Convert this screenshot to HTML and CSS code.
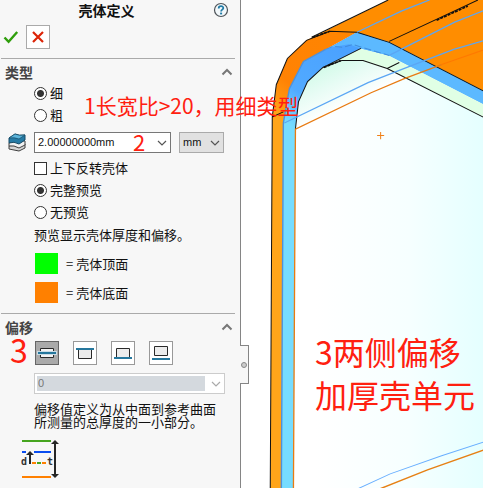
FILE: index.html
```html
<!DOCTYPE html>
<html lang="zh-CN">
<head>
<meta charset="utf-8">
<title>壳体定义</title>
<link rel="stylesheet" href="styles.css">
</head>
<body>
<main class="app">
  <form class="panel">
    <header class="panel-head">
      <h1 class="title">壳体定义</h1>
      <button class="help" type="button" aria-label="帮助">
        <svg width="16" height="16" viewBox="0 0 16 16"><circle cx="8" cy="8" r="6.5" fill="#f2f8fb" stroke="#4d5358" stroke-width="1.2"/><path d="M5.7 6.4C5.7 3.3 10.4 3.5 10.3 6.1C10.2 7.6 8.1 7.7 8.1 9.4" fill="none" stroke="#207aa5" stroke-width="1.8"/><path d="M7.1 10.6h2v1.8h-2z" fill="#207aa5"/></svg>
      </button>
    </header>
    <div class="actions">
      <button class="ok" type="button" aria-label="确定">
        <svg width="16" height="14" viewBox="0 0 16 14"><path d="M1.5 7.5L5.6 11.8L14.2 2" fill="none" stroke="#2f9e0c" stroke-width="2.4"/></svg>
      </button>
      <button class="cancel" type="button" aria-label="取消">
        <svg width="12" height="12" viewBox="0 0 12 12"><path d="M1 1L11 11M11 1L1 11" fill="none" stroke="#dc2407" stroke-width="2.2"/></svg>
      </button>
    </div>

    <section class="section">
      <div class="section-head">
        <h2 class="heading">类型</h2>
        <button class="collapse" type="button" aria-label="折叠类型"><svg width="12" height="8" viewBox="0 0 12 8"><path d="M1.5 6.5L6 2L10.5 6.5" fill="none" stroke="#777" stroke-width="2"/></svg></button>
      </div>
      <div class="content">
        <label class="option"><input class="radio" type="radio" name="type" checked>细</label>
        <label class="option"><input class="radio" type="radio" name="type">粗</label>
        <span class="note note-ratio">1长宽比&gt;20，用细类型</span>
      </div>
      <div class="thickness">
        <svg class="layers" width="18" height="19" viewBox="0 0 18 19"><path d="M1 13L7 10L17 11V15L11 18L1 16Z" fill="#d5d5d5" stroke="#3f3f3f"/><path d="M1 10L7 7L17 8V12L11 15Q6 12 1 13Z" fill="#f2f2f2" stroke="#3f3f3f"/><path d="M1 5L7 1Q11 3 17 2V7L11 11Q6 8 1 10Z" fill="#267ba5" stroke="#164a66"/><path d="M1 5L7 1Q11 3 17 2L11 6Q6 4 1 5Z" fill="#5db5db" stroke="#164a66" stroke-width=".7"/></svg>
        <div class="combo combo-value">
          <select class="select" aria-label="厚度"><option>2.00000000mm</option></select>
          <svg class="chevron" width="10" height="6" viewBox="0 0 10 6"><path d="M1 1L5 5L9 1" fill="none" stroke="#555" stroke-width="1.2"/></svg>
          <span class="note note-two">2</span>
        </div>
        <div class="combo combo-unit">
          <select class="select" aria-label="单位"><option>mm</option></select>
          <svg class="chevron" width="10" height="6" viewBox="0 0 10 6"><path d="M1 1L5 5L9 1" fill="none" stroke="#555" stroke-width="1.2"/></svg>
        </div>
      </div>
      <div class="content">
        <label class="option"><input class="check" type="checkbox">上下反转壳体</label>
        <label class="option"><input class="radio" type="radio" name="preview" checked>完整预览</label>
        <label class="option"><input class="radio" type="radio" name="preview">无预览</label>
        <p class="hint">预览显示壳体厚度和偏移。</p>
        <ul class="legend">
          <li class="legend-row"><span class="swatch swatch-top"></span>= 壳体顶面</li>
          <li class="legend-row"><span class="swatch swatch-bottom"></span>= 壳体底面</li>
        </ul>
      </div>
    </section>

    <section class="section">
      <div class="section-head">
        <h2 class="heading">偏移</h2>
        <button class="collapse" type="button" aria-label="折叠偏移"><svg width="12" height="8" viewBox="0 0 12 8"><path d="M1.5 6.5L6 2L10.5 6.5" fill="none" stroke="#777" stroke-width="2"/></svg></button>
      </div>
      <div class="content">
        <span class="note note-three">3</span>
        <div class="tools">
          <button class="tool tool-on" type="button" aria-label="中面"><svg width="22" height="22" viewBox="0 0 22 22"><path d="M4.5 6.5h13v9h-13z" fill="#f4f4f4" stroke="#292929"/><path d="M1 9h20v4H1z" fill="#cbdce5"/><path d="M2 10h18v2H2z" fill="#26779d"/></svg></button>
          <button class="tool" type="button" aria-label="顶面"><svg width="22" height="22" viewBox="0 0 22 22"><path d="M4.5 7.5h13v9h-13z" fill="#ececec" stroke="#292929"/><path d="M2 6h18v2H2z" fill="#26779d"/></svg></button>
          <button class="tool" type="button" aria-label="底面"><svg width="22" height="22" viewBox="0 0 22 22"><path d="M4.5 6.5h13v9h-13z" fill="#ececec" stroke="#292929"/><path d="M2 15h18v2H2z" fill="#26779d"/></svg></button>
          <button class="tool" type="button" aria-label="参考曲面"><svg width="22" height="22" viewBox="0 0 22 22"><path d="M4.5 4.5h13v9h-13z" fill="#ececec" stroke="#292929"/><path d="M2 16h18v2H2z" fill="#26779d"/></svg></button>
        </div>
        <div class="combo combo-offset">
          <select class="select" aria-label="偏移值" disabled><option>0</option></select>
          <svg class="chevron" width="10" height="6" viewBox="0 0 10 6"><path d="M1 1L5 5L9 1" fill="none" stroke="#aaa" stroke-width="1.2"/></svg>
        </div>
        <p class="explain">偏移值定义为从中面到参考曲面<br>所测量的总厚度的一小部分。</p>
      </div>
      <svg class="diagram" width="40" height="44" viewBox="0 0 40 44">
        <path d="M1 3h29" stroke="#46a51f" stroke-width="2"/><path d="M1 14h4M13 14h17" stroke="#0a4df0" stroke-width="2"/>
        <path d="M1 39h29" stroke="#ff8000" stroke-width="2"/><path d="M11 25h4M21 25h4" stroke="#ff8000" stroke-width="2"/><path d="M16 25h4" stroke="#46a51f" stroke-width="2"/>
        <path d="M9 26V15M34 5v33" stroke="#262626" stroke-width="2"/><path d="M5 17L9 13L13 17ZM30 6L34 2L38 6ZM30 36L34 40L38 36Z" fill="#262626"/>
        <text class="diagram-text" x="0" y="27">d</text><text class="diagram-text" x="26" y="27">t</text>
      </svg>
    </section>
    <button class="handle" type="button" aria-label="收起面板"><span class="handle-dot"></span></button>
  </form>

  <section class="view">
    <svg class="model" viewBox="241 0 242 488" preserveAspectRatio="xMinYMin slice">
      <defs>
        <linearGradient id="inside" gradientUnits="userSpaceOnUse" x1="315" y1="0" x2="483" y2="0"><stop offset="0" stop-color="#fff"/><stop offset=".55" stop-color="#f6ffff"/><stop offset="1" stop-color="#e4ffff"/></linearGradient>
        <linearGradient id="corner" gradientUnits="userSpaceOnUse" x1="320" y1="62" x2="342" y2="108"><stop offset="0" stop-color="#cffbe6"/><stop offset=".5" stop-color="#e8fcf5"/><stop offset="1" stop-color="#fff"/></linearGradient>
        <linearGradient id="rim" gradientUnits="userSpaceOnUse" x1="350" y1="30" x2="276" y2="116"><stop offset="0" stop-color="#ff8500"/><stop offset=".7" stop-color="#ff8204"/><stop offset="1" stop-color="#ffa51a"/></linearGradient>
        <linearGradient id="band" gradientUnits="userSpaceOnUse" x1="340" y1="50" x2="287" y2="122"><stop offset="0" stop-color="#4ba2ff"/><stop offset=".65" stop-color="#51aaff"/><stop offset="1" stop-color="#76dcff"/></linearGradient>
      </defs>
      <path d="M294 488L295 128L370 92L403 78L483 108V488Z" fill="url(#inside)"/>
      <path d="M295 128L298 101L307 81L322 67L341 60H362L386 68L403 78L370 92Z" fill="url(#corner)"/>
      <path d="M403 78L483 49V117Z" fill="#f0ffff"/>
      <path d="M322 67L360 48L388 55L483 104V117L386 68L362 60H341Z" fill="#e0ffe5"/>
      <path d="M306 40L387 0H483V91L388 42L356 32Z" fill="#ff8d00"/>
      <path d="M270 488L272 116L276 84L287 58L306 40L329 31L356 32L325 49L303 61L289 88L283 122L281 488Z" fill="url(#rim)"/>
      <path d="M281 488L283 122L289 88L303 61L325 49L356 32L388 42L483 91V104L388 55L360 48L322 67L307 81L298 101L295 128L293 488Z" fill="url(#band)"/>
      <path d="M356 32L388 42L483 91V104L388 55L360 48L348 44L330 47Z" fill="#5cb9ff"/>
      <path d="M281 488L283 122L289 88L303 61L325 49" fill="none" stroke="#4e91db" stroke-width="1.4"/>
      <path d="M325 49L332 46L342 47L352 44L361 47L388 55" fill="none" stroke="#418ddd" stroke-dasharray="7 3"/>
      <path d="M270 488L272 116L276 84L287 58L306 40L329 31L356 32L388 42L483 91M311 37L387 0M272 116L283 111M295 128L298 101L307 81L322 67L360 48M322 67L341 60H362L386 68L483 117M386 68L398 62M388 41L476 0" fill="none" stroke="#111"/>
      <path d="M312 37L329 31M435 20L466 6M323 67L340 60" stroke="#111" stroke-width="1.7" stroke-dasharray="3 1"/>
      <path d="M356 32L400 11L428 0M388 55L453 22L483 10M284 122L367 82L405 67L452 49L483 40" fill="none" stroke="#5ba6f4" stroke-width="1.3"/>
      <path d="M293 488L295 128L370 92L403 78L440 64" fill="none" stroke="#e87b12" stroke-width="1.3"/><path d="M440 64L483 49" stroke="#ff7900"/>
      <path d="M350 488L389 470L440 452L483 438" fill="none" stroke="#69afff"/><path d="M371 488L426 466L483 446" fill="none" stroke="#e68014" stroke-width="1.4"/>
      <path d="M376 134.500h7M379.500 131v7" stroke="#f08018"/>
    </svg>
    <p class="note note-offset">3两侧偏移<br>加厚壳单元</p>
  </section>
</main>
</body>
</html>
```
FILE: styles.css
```css
* { box-sizing: border-box; }
body {
  margin: 0;
  background: #fff;
  color: #111;
  font: 13px/22px "Noto Sans CJK SC", sans-serif;
}
h1, h2, p, ul { margin: 0; padding: 0; }
button {
  display: flex;
  align-items: center;
  justify-content: center;
  padding: 0;
  border: 0;
  background: none;
}
svg { display: block; flex: none; }

.app {
  display: grid;
  grid-template-columns: 241px 1fr;
  min-height: 100vh;
}
.panel {
  position: relative;
  z-index: 1;
  background: #f7f7f7;
  border-right: 1px solid #858585;
}
.panel-head {
  display: flex;
  align-items: center;
  height: 20px;
  padding-right: 11px;
}
.title {
  flex: 1;
  font-size: 14px;
  line-height: 20px;
  text-align: center;
}
.actions {
  display: flex;
  gap: 7px;
  height: 38px;
  padding: 5px 3px 9px;
}
.cancel {
  width: 24px;
  height: 24px;
  border: 1px solid #aaa;
  background: #fff;
}
.section { padding-bottom: 10px; }
.section-head {
  display: flex;
  justify-content: space-between;
  align-items: center;
  height: 24px;
  margin: 0 5px 0 1px;
  padding: 3px 2px 0 4px;
  border-top: 1px solid #aaa;
}
.heading {
  color: #444;
  font-size: 14px;
  line-height: 16px;
}
.content {
  position: relative;
  padding-left: 34px;
}
.option {
  display: flex;
  align-items: center;
  gap: 3px;
}
.radio, .check {
  flex: none;
  width: 13px;
  height: 13px;
  margin: 0;
  appearance: none;
  border: 1px solid #333;
  background: #fff;
}
.radio { border-radius: 50%; }
.radio:checked { background: radial-gradient(circle, #333 0 3px, #fff 4px); }

.thickness {
  display: flex;
  align-items: center;
  margin: 6px 16px 4px 8px;
}
.layers { margin-right: 8px; }
.combo {
  position: relative;
  height: 21px;
}
.combo-value { flex: 1; margin-right: 8px; }
.combo-unit { width: 45px; }
.combo-offset { margin: 8px 15px 8px 0; }
.select {
  display: block;
  width: 100%;
  height: 100%;
  padding: 0 3px;
  appearance: none;
  border: 1px solid #777;
  border-radius: 0;
  background: #fff;
  color: #111;
  font: 11px/19px "Liberation Sans", sans-serif;
}
.combo-unit .select { background: #e1e1e1; border-color: #aaa; }
.combo-offset .select {
  padding-right: 20px;
  border-color: #ccc;
  background: #d4d9de;
  box-shadow: inset 0 0 0 2px #fff, inset -19px 0 #fff;
  color: #777;
  opacity: 1;
}
.chevron {
  position: absolute;
  top: 8px;
  right: 4px;
  pointer-events: none;
}
.hint { line-height: 24px; }
.legend {
  display: grid;
  gap: 8px;
  margin: 6px 0 0 1px;
  list-style: none;
}
.legend-row {
  display: flex;
  align-items: center;
  gap: 8px;
  line-height: 21px;
}
.swatch { width: 23px; height: 21px; }
.swatch-top { background: #0f0; }
.swatch-bottom { background: #ff8000; }

.tools {
  display: flex;
  gap: 14px;
  padding: 4px 0 0 1px;
}
.tool {
  width: 24px;
  height: 24px;
  border: 1px solid #999;
  background: #fff;
}
.tool-on { border-color: #666; background: #aaa; }
.explain { line-height: 13px; }
.diagram { margin: 10px 0 0 21px; }
.diagram-text {
  fill: #333;
  font: bold 10px "DejaVu Sans Mono", monospace;
}
.handle {
  position: absolute;
  top: 345px;
  right: -9px;
  width: 9px;
  height: 39px;
  border: 1px solid #858585;
  border-left: 0;
  background: #f7f7f7;
}
.handle-dot {
  width: 6px;
  height: 6px;
  border: 1px solid #888;
  border-radius: 50%;
  background: #ccc;
}

.view {
  position: relative;
  overflow: hidden;
}
.model {
  position: absolute;
  inset: 0;
  width: 100%;
  height: 100%;
}
.note {
  position: absolute;
  color: #ff2010;
  font-family: "Noto Sans CJK SC", sans-serif;
  white-space: nowrap;
  pointer-events: none;
}
.note-ratio {
  top: 7px;
  left: 84px;
  font-size: 21px;
  line-height: 32px;
}
.note-two {
  top: -2px;
  left: 99px;
  font-size: 22px;
  line-height: 22px;
}
.note-three {
  top: -4px;
  left: 10px;
  font-size: 32px;
  line-height: 32px;
}
.note-offset {
  top: 330px;
  left: 74px;
  font-size: 32px;
  line-height: 43px;
}
```
